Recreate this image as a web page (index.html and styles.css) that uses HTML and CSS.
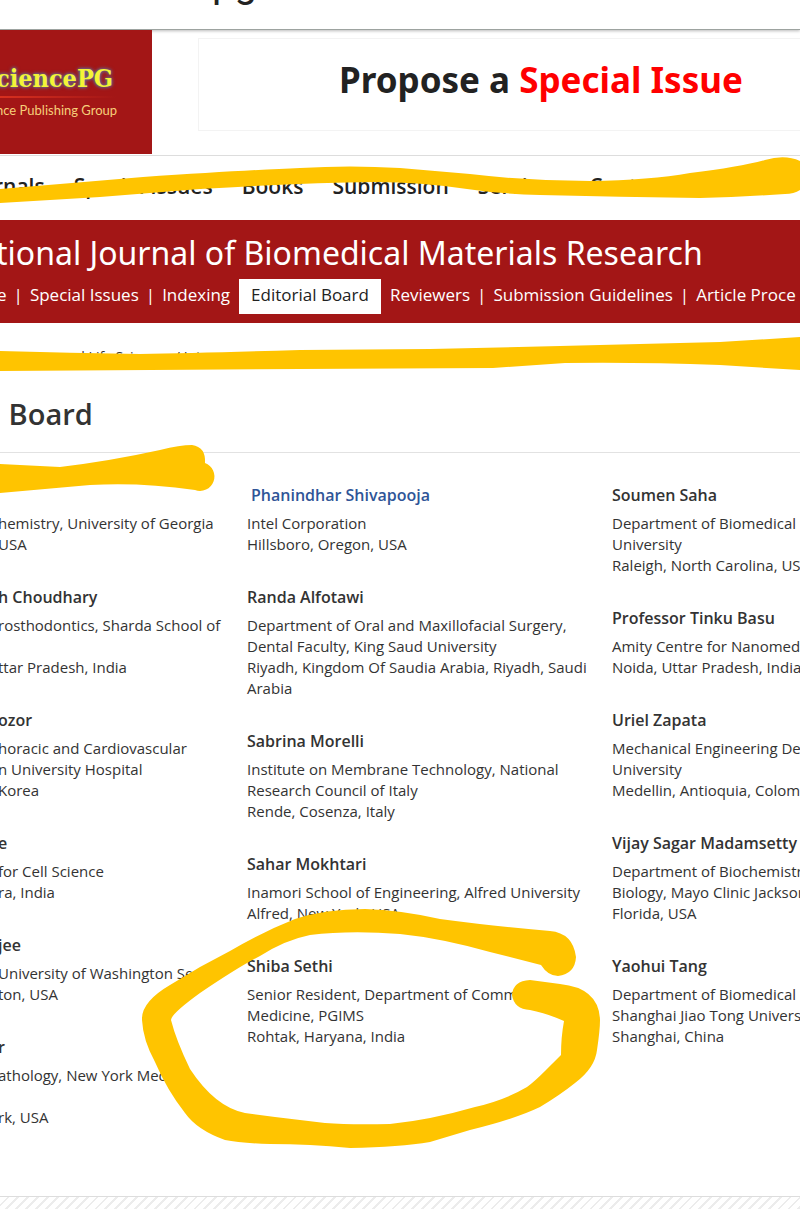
FILE: index.html
```html
<!DOCTYPE html>
<html lang="en">
<head>
  <meta charset="UTF-8" />
  <meta name="viewport" content="width=device-width, initial-scale=1.0"/>
  <title>Editorial Board</title>
  <link rel="stylesheet" href="styles.css">
</head>
<body>

<div class="address-bar">pg</div>

<header class="header">
  <a class="logo" href="#">
    <span class="logo-name">ciencePG</span>
    <span class="logo-line"></span>
    <span class="logo-sub">nce Publishing Group</span>
  </a>
  <a class="banner" href="#">Propose a&nbsp;<span class="banner-red">Special Issue</span></a>
</header>

<nav class="main-nav">
  <a href="#">rnals</a>
  <a href="#">Special Issues</a>
  <a href="#">Books</a>
  <a href="#">Submission</a>
  <a href="#">Services</a>
  <a href="#">Contact</a>
</nav>

<section class="journal">
  <h2>tional Journal of Biomedical Materials Research</h2>
  <nav class="journal-nav">
    <a href="#">e</a>
    <span>|</span>
    <a href="#">Special Issues</a>
    <span>|</span>
    <a href="#">Indexing</a>
    <a class="active" href="#">Editorial Board</a>
    <a href="#">Reviewers</a>
    <span>|</span>
    <a href="#">Submission Guidelines</a>
    <span>|</span>
    <a href="#">Article Proce</a>
  </nav>
</section>

<div class="breadcrumb">and Life Sciences / International</div>

<main>
  <h1>l Board</h1>

  <div class="members">
    <div class="column">
      <div class="member">
        <h3>&nbsp;</h3>
        <p>hemistry, University of Georgia<br>USA</p>
      </div>
      <div class="member">
        <h3>h Choudhary</h3>
        <p>rosthodontics, Sharda School of<br>&nbsp;<br>ttar Pradesh, India</p>
      </div>
      <div class="member">
        <h3>ozor</h3>
        <p>horacic and Cardiovascular<br>n University Hospital<br>Korea</p>
      </div>
      <div class="member">
        <h3>e</h3>
        <p>for Cell Science<br>ra, India</p>
      </div>
      <div class="member">
        <h3>jee</h3>
        <p>University of Washington Se<br>ton, USA</p>
      </div>
      <div class="member">
        <h3>r</h3>
        <p>athology, New York Med<br>&nbsp;<br>rk, USA</p>
      </div>
    </div>

    <div class="column">
      <div class="member">
        <h3><a href="#">Phanindhar Shivapooja</a></h3>
        <p>Intel Corporation<br>Hillsboro, Oregon, USA</p>
      </div>
      <div class="member">
        <h3>Randa Alfotawi</h3>
        <p>Department of Oral and Maxillofacial Surgery,<br>Dental Faculty, King Saud University<br>Riyadh, Kingdom Of Saudia Arabia, Riyadh, Saudi<br>Arabia</p>
      </div>
      <div class="member">
        <h3>Sabrina Morelli</h3>
        <p>Institute on Membrane Technology, National<br>Research Council of Italy<br>Rende, Cosenza, Italy</p>
      </div>
      <div class="member">
        <h3>Sahar Mokhtari</h3>
        <p>Inamori School of Engineering, Alfred University<br>Alfred, New York, USA</p>
      </div>
      <div class="member">
        <h3>Shiba Sethi</h3>
        <p>Senior Resident, Department of Comm<br>Medicine, PGIMS<br>Rohtak, Haryana, India</p>
      </div>
    </div>

    <div class="column">
      <div class="member">
        <h3>Soumen Saha</h3>
        <p>Department of Biomedical<br>University<br>Raleigh, North Carolina, USA</p>
      </div>
      <div class="member">
        <h3>Professor Tinku Basu</h3>
        <p>Amity Centre for Nanomedi<br>Noida, Uttar Pradesh, India</p>
      </div>
      <div class="member">
        <h3>Uriel Zapata</h3>
        <p>Mechanical Engineering De<br>University<br>Medellin, Antioquia, Colom</p>
      </div>
      <div class="member">
        <h3>Vijay Sagar Madamsetty</h3>
        <p>Department of Biochemistr<br>Biology, Mayo Clinic Jackson<br>Florida, USA</p>
      </div>
      <div class="member">
        <h3>Yaohui Tang</h3>
        <p>Department of Biomedical<br>Shanghai Jiao Tong Univers<br>Shanghai, China</p>
      </div>
    </div>
  </div>
</main>

<footer class="footer"></footer>

<!-- yellow marker drawn over the page -->
<svg class="marker" width="800" height="1209" viewBox="0 0 800 1209" aria-hidden="true">
  <path d="M0 189 L72 183 L143 177 Q250 170 300 168 Q350 165 400 168 L470 174 Q530 181 590 181 Q650 180 690 173 Q740 167 765 160 Q785 154 800 161 V190 Q794 194 785 194 Q740 197 700 198 Q620 197 540 195 Q500 194 467 189 Q420 182 375 182 Q300 183 200 189 L100 197 L0 203 Z"/>
  <path d="M0 351 Q70 353 140 354 Q200 353 300 350 L430 349 L560 346 L720 342 L800 337 V370 L720 365 Q640 362 565 363 L493 368 L300 369 L150 370 L0 371 Z"/>
  <path d="M0 464 L60 467 Q110 461 160 450 Q180 445 192 445 Q206 447 205 463 A14 14 0 1 1 195 490 Q140 482 90 485 L0 493 Z"/>
  <path d="M541 965 Q548 976 558 976 Q575 974 576 957 Q573 933 550 931 Q500 927 440 919 Q400 910 365 909 Q325 909 295 919 Q260 933 230 951 L200 967 L170 985 Q141 1002 142 1020 Q143 1040 155 1062 Q167 1090 185 1113 Q197 1130 225 1140 Q240 1143 270 1144 Q310 1144 350 1148 Q400 1147 430 1142 L470 1130 Q515 1119 540 1107 Q560 1095 575 1083 Q595 1068 597 1050 Q600 1030 600 1020 Q599 988 560 984 L530 980 Q513 981 512 995 Q514 1009 530 1010 Q546 1013 564 1021 Q561 1037 561 1055 Q553 1063 546 1070 Q534 1082 527 1087 Q505 1100 475 1107 Q430 1120 390 1124 Q350 1125 325 1123 Q300 1120 275 1117 L245 1113 Q215 1107 190 1069 Q176 1040 171 1020 Q171 1014 200 993 Q240 966 260 956 Q285 940 310 935 Q350 930 400 934 Q440 938 490 952 Z"/>
</svg>

</body>
</html>
```
FILE: styles.css
```css
* {
  box-sizing: border-box;
}

html {
  overflow-x: hidden;
}

body {
  position: relative;
  margin: 0;
  overflow: hidden;
  font-family: 'Open Sans', sans-serif;
  font-size: 15px;
  color: #333;
  background: #fff;
  white-space: nowrap;
}

a {
  color: inherit;
  text-decoration: none;
}

h1, h2, h3, p {
  margin: 0;
}

.address-bar {
  display: flex;
  align-items: flex-end;
  height: 30px;
  padding: 0 0 23px 212px;
  overflow: hidden;
  font-family: Roboto, sans-serif;
  font-size: 40px;
  line-height: 44px;
  color: #222;
  border-bottom: 1px solid #9da3a0;
  box-shadow: 0 1px 3px #bbb;
}

.header {
  display: flex;
  height: 126px;
  border-bottom: 1px solid #ddd;
}

.logo {
  width: 152px;
  height: 124px;
  padding-top: 32px;
  text-indent: -4px;
  background: #a31616;
}

.logo-name {
  display: block;
  font-family: 'DejaVu Serif Condensed', 'DejaVu Serif', serif;
  font-size: 25px;
  font-weight: bold;
  line-height: 34px;
  color: #f4f436;
  text-shadow: 0 0 3px #5577aa, 0 0 4px #5577aa;
}

.logo-line {
  display: block;
  width: 116px;
  height: 2px;
  background: linear-gradient(to right, #d8301f, #a31616);
}

.logo-sub {
  display: block;
  font-family: Lato, sans-serif;
  font-size: 13px;
  line-height: 24px;
  color: #f6cf7a;
}

.banner {
  display: flex;
  flex: 1;
  align-items: center;
  height: 93px;
  margin: 8px 0 0 46px;
  padding: 0 0 10px 140px;
  font-family: 'Noto Sans', sans-serif;
  font-size: 35px;
  font-weight: 700;
  color: #222;
  border: 1px solid #f3f3f3;
  border-right: 0;
}

.banner-red {
  color: #f00;
}

.main-nav {
  display: flex;
  gap: 29px;
  height: 64px;
  margin-left: -6px;
  padding-top: 14px;
  font-size: 21px;
  font-weight: 600;
  line-height: 32px;
  color: #222;
}

.journal {
  height: 103px;
  padding-top: 12px;
  color: #fff;
  background: #a31616;
}

.journal h2 {
  margin-left: -4px;
  font-family: 'Noto Sans', sans-serif;
  font-size: 32px;
  font-weight: 400;
  line-height: 42px;
}

.journal-nav {
  display: flex;
  gap: 7px;
  margin: 5px 0 0 -3px;
  font-size: 17px;
  line-height: 32px;
}

.journal-nav .active {
  height: 35px;
  margin: 0 2px;
  padding: 0 12px;
  color: #222;
  background: #fff;
}

.breadcrumb {
  padding: 24px 0 0 60px;
  font-size: 14px;
  line-height: 20px;
}

h1 {
  padding: 27px 0 18px;
  text-indent: -7px;
  font-size: 29px;
  font-weight: 600;
  line-height: 40px;
  border-bottom: 1px solid #e2e2e2;
}

.members {
  display: grid;
  grid-template-columns: 249px 365px 1fr;
  margin-left: -2px;
  padding: 30px 0 38px;
}

.column {
  min-width: 0;
}

.member {
  margin-bottom: 30px;
}

.member h3 {
  margin-bottom: 6px;
  font-size: 16px;
  font-weight: 600;
  line-height: 24px;
}

.member h3 a {
  margin-left: 4px;
  color: #2f5597;
}

.member p {
  line-height: 21px;
}

.footer {
  height: 13px;
  border-top: 1px solid #ddd;
  background: repeating-linear-gradient(135deg, #fff 0 5px, #ececec 5px 7px);
}

.marker {
  position: absolute;
  top: 0;
  left: 0;
  fill: #ffc400;
  pointer-events: none;
}
```
